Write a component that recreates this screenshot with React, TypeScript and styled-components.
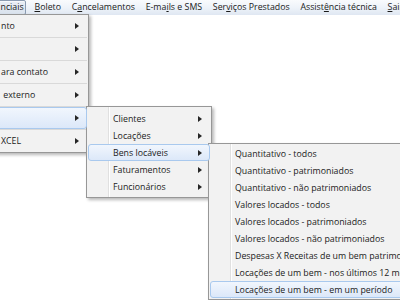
import React from 'react';
import styled, { createGlobalStyle, css } from 'styled-components';

const GlobalStyle = createGlobalStyle`
  html, body {
    margin: 0;
    padding: 0;
    background: #ffffff;
  }
  body {
    font-family: 'Open Sans', 'Noto Sans', sans-serif;
    font-size: 8.8px;
    color: #1b1b1b;
  }
`;

const Screen = styled.div`
  position: relative;
  width: 400px;
  height: 300px;
  overflow: hidden;
  background: #ffffff;
`;

const MenuBar = styled.div`
  display: flex;
  align-items: stretch;
  height: 15px;
  background: linear-gradient(to bottom, #f9fbfd 0%, #eef3f9 50%, #dfe7f2 100%);
  white-space: nowrap;
`;

const BarItem = styled.div<{ $open?: boolean }>`
  flex-shrink: 0;
  display: flex;
  align-items: center;
  padding: 0 4.35px;
  line-height: 13px;
  border: 1px solid transparent;
  border-radius: 2px;
  ${p =>
    p.$open &&
    css`
      margin-left: -8px;
      padding-left: 7.5px;
      padding-right: 1.5px;
      margin-right: 3px;
      border-color: #8a9bb1;
      background: linear-gradient(to bottom, #e9eef5, #d9e2ed);
      box-shadow: inset 0 1px 0 #f6f8fb;
    `}
`;

const Key = styled.span`
  text-decoration: underline;
  text-underline-offset: 1px;
`;

const Menu = styled.div<{ $left: number; $top: number; $width: number; $pad: string; $gutter?: boolean }>`
  position: absolute;
  left: ${p => p.$left}px;
  top: ${p => p.$top}px;
  width: ${p => p.$width}px;
  box-sizing: border-box;
  padding: ${p => p.$pad};
  background: #f2f2f2;
  border: 1px solid #979797;
  box-shadow: 2px 2px 3px rgba(0, 0, 0, 0.28);
  white-space: nowrap;
  ${p =>
    p.$gutter &&
    css`
      &::before {
        content: '';
        position: absolute;
        left: 21px;
        top: 0;
        bottom: 0;
        width: 1px;
        background: #e0e0e0;
        box-shadow: 1px 0 0 #ffffff;
      }
    `}
`;

const Item = styled.div<{ $h: number; $text: number; $active?: boolean }>`
  position: relative;
  z-index: 1;
  display: flex;
  align-items: center;
  justify-content: space-between;
  box-sizing: border-box;
  height: ${p => p.$h}px;
  padding: 0 7px 0 ${p => p.$text}px;
  border: 1px solid transparent;
  border-radius: 3px;
  ${p =>
    p.$active &&
    css`
      border-color: #a9c9ee;
      background: linear-gradient(to bottom, #f1f6fd, #dce8f9);
    `}
`;

const Label = styled.span`
  white-space: pre;
`;

const Separator = styled.div`
  height: 1px;
  background: #d9d9d9;
`;

const Arrow = styled.span`
  width: 0;
  height: 0;
  border-left: 4px solid #262626;
  border-top: 3.5px solid transparent;
  border-bottom: 3.5px solid transparent;
`;

const barItems: { pre: string; key: string; post: string }[] = [
  { pre: '', key: 'B', post: 'oleto' },
  { pre: 'C', key: 'a', post: 'ncelamentos' },
  { pre: 'E-ma', key: 'i', post: 'ls e SMS' },
  { pre: 'Ser', key: 'v', post: 'iços Prestados' },
  { pre: 'Assist', key: 'ê', post: 'ncia técnica' },
  { pre: '', key: 'S', post: 'air' },
];

const firstMenu = ['nto', '', 'ara contato', ' externo', '', 'XCEL'];
const secondMenu = ['Clientes', 'Locações', 'Bens locáveis', 'Faturamentos', 'Funcionários'];
const thirdMenu = [
  'Quantitativo - todos',
  'Quantitativo - patrimoniados',
  'Quantitativo - não patrimoniados',
  'Valores locados - todos',
  'Valores locados - patrimoniados',
  'Valores locados - não patrimoniados',
  'Despesas X Receitas de um bem patrimoniado',
  'Locações de um bem - nos últimos 12 meses',
  'Locações de um bem - em um período',
];

function App(): JSX.Element {
  return (
    <Screen>
      <GlobalStyle />
      <MenuBar>
        <BarItem $open>nciais</BarItem>
        {barItems.map(b => (
          <BarItem key={b.pre + b.key + b.post}>
            {b.pre}
            <Key>{b.key}</Key>
            {b.post}
          </BarItem>
        ))}
      </MenuBar>

      <Menu $left={-30} $top={14} $width={119} $pad="0 1px">
        {firstMenu.map((label, i) => (
          <React.Fragment key={i}>
            {i > 0 && <Separator />}
            <Item $h={22} $text={28} $active={i === 4}>
              <Label>{label}</Label>
              <Arrow />
            </Item>
          </React.Fragment>
        ))}
      </Menu>

      <Menu $left={86} $top={106} $width={126} $pad="3px 1px 2px 1px" $gutter>
        {secondMenu.map((label, i) => (
          <Item key={label} $h={17} $text={24} $active={i === 2}>
            <Label>{label}</Label>
            <Arrow />
          </Item>
        ))}
      </Menu>

      <Menu $left={208} $top={143} $width={240} $pad="1px" $gutter>
        {thirdMenu.map((label, i) => (
          <Item key={label} $h={17} $text={24} $active={i === thirdMenu.length - 1}>
            <Label>{label}</Label>
          </Item>
        ))}
      </Menu>
    </Screen>
  );
}

export default App;
